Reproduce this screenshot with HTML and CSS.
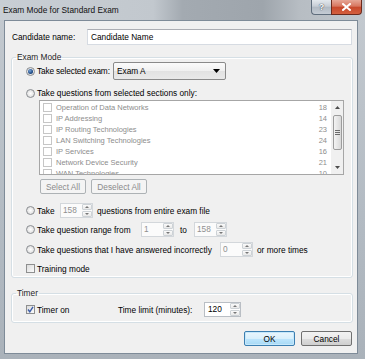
FILE: index.html
```html
<!DOCTYPE html>
<html lang="en">
<head>
  <meta charset="UTF-8" />
  <title>Exam Mode for Standard Exam</title>
  <link rel="stylesheet" href="styles.css">
</head>
<body>

  <div class="window">
    <!-- Title bar -->
    <div class="titlebar">
      <span class="title">Exam Mode for Standard Exam</span>
      <div class="caption-buttons">
        <span class="cap-btn help">?</span>
        <span class="cap-btn close">
          <svg width="9" height="8" viewBox="0 0 9 8"><path d="M1 1 L8 7 M8 1 L1 7" stroke="#fff" stroke-width="2" stroke-linecap="square"/></svg>
        </span>
      </div>
    </div>

    <div class="client">
      <div class="name-row">
        <span class="name-label">Candidate name:</span>
        <div class="textbox name-box">Candidate Name</div>
      </div>

      <!-- Exam mode group -->
      <fieldset class="group exam-group">
        <legend>Exam Mode</legend>

        <div class="row row-exam">
          <span class="radio checked"></span>
          <span class="lbl w-exam">Take selected exam:</span>
          <div class="combo">
            <span>Exam A</span>
            <svg class="combo-arrow" width="7" height="4" viewBox="0 0 7 4"><path d="M0 0 H7 L3.5 4 Z" fill="#000"/></svg>
          </div>
        </div>

        <div class="row row-sections">
          <span class="radio"></span>
          <span class="lbl">Take questions from selected sections only:</span>
        </div>

        <div class="listbox">
          <div class="list-items">
            <div class="item"><span class="check"></span><span class="item-name">Operation of Data Networks</span><span class="count">18</span></div>
            <div class="item"><span class="check"></span><span class="item-name">IP Addressing</span><span class="count">14</span></div>
            <div class="item"><span class="check"></span><span class="item-name">IP Routing Technologies</span><span class="count">23</span></div>
            <div class="item"><span class="check"></span><span class="item-name">LAN Switching Technologies</span><span class="count">24</span></div>
            <div class="item"><span class="check"></span><span class="item-name">IP Services</span><span class="count">16</span></div>
            <div class="item"><span class="check"></span><span class="item-name">Network Device Security</span><span class="count">21</span></div>
            <div class="item"><span class="check"></span><span class="item-name">WAN Technologies</span><span class="count">10</span></div>
          </div>
          <div class="scrollbar">
            <div class="sb-arrow">
              <svg width="5" height="3" viewBox="0 0 5 3"><path d="M0 3 H5 L2.5 0 Z" fill="#4d4d4d"/></svg>
            </div>
            <div class="sb-thumb">
              <svg width="5" height="5" viewBox="0 0 5 5"><path d="M0 0.5 H5 M0 2.5 H5 M0 4.5 H5" stroke="#6a6a6a" stroke-width="1"/></svg>
            </div>
            <div class="sb-space"></div>
            <div class="sb-arrow">
              <svg width="5" height="3" viewBox="0 0 5 3"><path d="M0 0 H5 L2.5 3 Z" fill="#4d4d4d"/></svg>
            </div>
          </div>
        </div>

        <div class="list-buttons">
          <span class="btn disabled select-all">Select All</span>
          <span class="btn disabled deselect-all">Deselect All</span>
        </div>

        <div class="row row-take">
          <span class="radio"></span>
          <span class="lbl w-take">Take</span>
          <div class="spin disabled">
            <span class="spin-val">158</span>
            <span class="spin-arrows"><span class="sp-up"></span><span class="sp-down"></span></span>
          </div>
          <span class="lbl after">questions from entire exam file</span>
        </div>

        <div class="row row-range">
          <span class="radio"></span>
          <span class="lbl w-range">Take question range from</span>
          <div class="spin disabled">
            <span class="spin-val">1</span>
            <span class="spin-arrows"><span class="sp-up"></span><span class="sp-down"></span></span>
          </div>
          <span class="lbl to">to</span>
          <div class="spin disabled">
            <span class="spin-val">158</span>
            <span class="spin-arrows"><span class="sp-up"></span><span class="sp-down"></span></span>
          </div>
        </div>

        <div class="row row-wrong">
          <span class="radio"></span>
          <span class="lbl w-wrong">Take questions that I have answered incorrectly</span>
          <div class="spin disabled">
            <span class="spin-val">0</span>
            <span class="spin-arrows"><span class="sp-up"></span><span class="sp-down"></span></span>
          </div>
          <span class="lbl after">or more times</span>
        </div>

        <div class="row row-training">
          <span class="checkbox"></span>
          <span class="lbl">Training mode</span>
        </div>
      </fieldset>

      <!-- Timer group -->
      <fieldset class="group timer-group">
        <legend>Timer</legend>
        <div class="row row-timer">
          <span class="checkbox checked">
            <svg width="7" height="7" viewBox="0 0 7 7"><path d="M1 3.5 L2.8 5.8 L6 0.8" stroke="#3b5ca8" stroke-width="1.4" fill="none"/></svg>
          </span>
          <span class="lbl w-timer">Timer on</span>
          <span class="lbl w-limit">Time limit (minutes):</span>
          <div class="spin time-spin">
            <span class="spin-val">120</span>
            <span class="spin-arrows"><span class="sp-up"></span><span class="sp-down"></span></span>
          </div>
        </div>
      </fieldset>

      <div class="dialog-buttons">
        <span class="btn default">OK</span>
        <span class="btn">Cancel</span>
      </div>
    </div>
  </div>

</body>
</html>
```

FILE: styles.css
```css
* {
  margin: 0;
  padding: 0;
  box-sizing: border-box;
}

body {
  width: 365px;
  height: 359px;
  overflow: hidden;
  font-family: 'Liberation Sans', Arial, sans-serif;
  font-size: 8.3px;
  color: #000;
  background: #b4bcc4;
}

.window {
  width: 365px;
  height: 359px;
  display: flex;
  flex-direction: column;
  padding: 0 7px 5px 4px;
  background: linear-gradient(to bottom, #c4cad0, #b3bbc3 60%, #aab2ba);
}

/* Title bar */
.titlebar {
  height: 20px;
  display: flex;
  align-items: flex-start;
  margin: 0 -7px 0 -4px;
  padding-left: 3px;
  background: linear-gradient(to right, #c8ced4 0%, #c2c8ce 42%, #a3aab1 50%, #9ea5ac 72%, #b7bdc3 82%, #c0c6cc 100%);
}

.title {
  line-height: 20px;
  font-size: 8.3px;
  color: #111;
  flex: 1;
}

.caption-buttons {
  display: flex;
  margin-right: 3px;
}

.cap-btn {
  height: 15px;
  display: flex;
  align-items: center;
  justify-content: center;
  border: 1px solid #5f6d7c;
  border-top: none;
}

.help {
  width: 20px;
  border-radius: 0 0 0 4px;
  border-right: none;
  background: linear-gradient(to bottom, #e3e8ed, #c6cdd5 45%, #b0b9c3 50%, #c5ccd4);
  color: #fff;
  font-weight: bold;
  font-size: 9px;
  text-shadow: 0 0 1px #3b4654, 0 0 1px #3b4654;
}

.close {
  width: 31px;
  border-color: #6c2a1d;
  border-radius: 0 0 4px 0;
  background: linear-gradient(to bottom, #e6a696, #d7765f 45%, #c7472b 50%, #d4603f);
}

/* Client area */
.client {
  flex: 1;
  display: flex;
  flex-direction: column;
  background: #f0f0f0;
  border: 1px solid #7e8b98;
  padding: 8px 4px 0 6px;
}

.name-row {
  display: flex;
  align-items: center;
  height: 16px;
  padding: 0 1px;
}

.name-label {
  width: 75px;
}

.textbox {
  background: #fff;
  border: 1px solid #d6dbe2;
  border-top-color: #abadb3;
}

.name-box {
  flex: 1;
  height: 16px;
  line-height: 14px;
  padding-left: 3px;
}

/* Group boxes */
.group {
  border: 1px solid #d5dfe5;
  border-radius: 3px;
  box-shadow: inset 0 0 0 1px #fff;
  min-width: 0;
}

.group legend {
  margin-left: 4px;
  padding: 0 1px;
  line-height: 10px;
  color: #1e1e1e;
}

.exam-group {
  margin-top: 7px;
  padding-bottom: 1px;
}

.timer-group {
  margin-top: 10px;
  padding-bottom: 5px;
}

.row {
  display: flex;
  align-items: center;
  height: 15px;
  padding-left: 14px;
}

.lbl {
  color: #000;
  white-space: nowrap;
}

.radio {
  width: 9px;
  height: 9px;
  border-radius: 50%;
  border: 1px solid #8a8d91;
  background: radial-gradient(circle at 50% 50%, #fff 0, #e6e6e6 60%, #cfd2d5 100%);
  margin-right: 2px;
  flex-shrink: 0;
  display: flex;
  align-items: center;
  justify-content: center;
}

.radio.checked::after {
  content: "";
  width: 5px;
  height: 5px;
  border-radius: 50%;
  background: radial-gradient(circle at 40% 35%, #7aa4d8, #1d4b86 60%, #0d2a55);
}

.checkbox {
  width: 9px;
  height: 9px;
  border: 1px solid #8e8f8f;
  background: linear-gradient(135deg, #dcdcdc, #fbfbfb);
  margin-right: 2px;
  flex-shrink: 0;
  display: flex;
  align-items: center;
  justify-content: center;
}

.row-exam {
  height: 18px;
}

.w-exam {
  width: 76px;
  letter-spacing: -0.15px;
}

.combo {
  width: 113px;
  height: 18px;
  display: flex;
  align-items: center;
  justify-content: space-between;
  padding: 0 5px 0 3px;
  border: 1px solid #8a8a8a;
  border-radius: 2px;
  background: linear-gradient(to bottom, #fbfbfb, #f0f0f0 50%, #e2e2e2 51%, #e9e9e9);
}

.row-sections {
  margin-top: 6px;
  height: 14px;
}

/* Section list */
.listbox {
  margin-left: 27px;
  width: 305px;
  height: 75px;
  display: flex;
  border: 1px solid #a6a6a6;
  background: #fff;
  overflow: hidden;
}

.list-items {
  flex: 1;
  padding-top: 0.5px;
}

.item {
  display: flex;
  align-items: center;
  height: 11px;
  padding: 0 4px 0 3px;
  font-size: 7.5px;
  color: #8d8d8d;
}

.check {
  width: 9px;
  height: 9px;
  border: 1px solid #c6c6c6;
  background: #fff;
  margin-right: 4px;
  flex-shrink: 0;
}

.item-name {
  flex: 1;
}

.scrollbar {
  width: 12px;
  display: flex;
  flex-direction: column;
  background: #f0f0f0;
  border-left: 1px solid #f0f0f0;
}

.sb-arrow {
  height: 13px;
  display: flex;
  align-items: center;
  justify-content: center;
}

.sb-thumb {
  height: 35px;
  margin: 1px 1px 0 1px;
  border: 1px solid #9c9c9c;
  border-radius: 2px;
  background: linear-gradient(to right, #f3f3f3, #e6e6e6 50%, #d8d8d8);
  display: flex;
  align-items: center;
  justify-content: center;
}

.sb-space {
  flex: 1;
}

/* Buttons */
.list-buttons {
  display: flex;
  gap: 5px;
  margin: 4px 0 0 28px;
}

.btn {
  height: 15px;
  display: flex;
  align-items: center;
  justify-content: center;
  border: 1px solid #707070;
  border-radius: 2px;
  background: linear-gradient(to bottom, #f2f2f2, #ebebeb 50%, #dddddd 51%, #cfcfcf);
  color: #000;
  width: 51px;
}

.btn.disabled {
  border-color: #adb2b5;
  background: #f4f4f4;
  color: #8b8b8b;
}

.select-all {
  width: 46px;
}

.deselect-all {
  width: 56px;
}

.btn.default {
  border-color: #3c7fb1;
  background: linear-gradient(to bottom, #eaf6fd, #d9f0fc 50%, #bee6fd 51%, #a7d9f5);
  box-shadow: inset 0 0 0 1px #c6e8fb;
}

/* Spin boxes */
.spin {
  display: flex;
  height: 15px;
  border: 1px solid #c8cdd2;
  background: #fff;
  flex-shrink: 0;
}

.spin.disabled {
  background: #fbfbfb;
  border-color: #d3d7db;
  color: #8f8f8f;
}

.spin-val {
  flex: 1;
  line-height: 13px;
  padding-left: 2px;
}

.spin-arrows {
  width: 10px;
  display: flex;
  flex-direction: column;
  gap: 1px;
}

.sp-up,
.sp-down {
  flex: 1;
  border: 1px solid #cdd2d6;
  border-radius: 1px;
  background: linear-gradient(to bottom, #fafafa, #e9e9e9);
  position: relative;
}

.sp-up::after,
.sp-down::after {
  content: "";
  position: absolute;
  left: 2px;
  top: 1px;
  border-left: 2px solid transparent;
  border-right: 2px solid transparent;
}

.sp-up::after {
  border-bottom: 2px solid #777;
}

.sp-down::after {
  border-top: 2px solid #777;
}

.row-take .spin,
.row-range .spin,
.row-wrong .spin {
  width: 33px;
}

.row-take {
  margin-top: 9px;
}

.row-range {
  margin-top: 4px;
}

.row-wrong {
  margin-top: 5px;
}

.row-training {
  margin-top: 4px;
}

.w-take {
  width: 23px;
}

.w-range {
  width: 104px;
}

.w-wrong {
  width: 183px;
}

.after {
  margin-left: 4px;
}

.to {
  width: 20px;
  padding-left: 6px;
}

.row-timer {
  margin-top: 4px;
}

.w-timer {
  width: 81px;
}

.w-limit {
  width: 86px;
}

.time-spin {
  width: 37px;
  border-color: #b9bec4;
}

.time-spin .spin-val {
  padding-left: 3px;
}

.dialog-buttons {
  display: flex;
  justify-content: flex-end;
  gap: 6px;
  margin-top: 8px;
  padding-right: 1px;
}
```
